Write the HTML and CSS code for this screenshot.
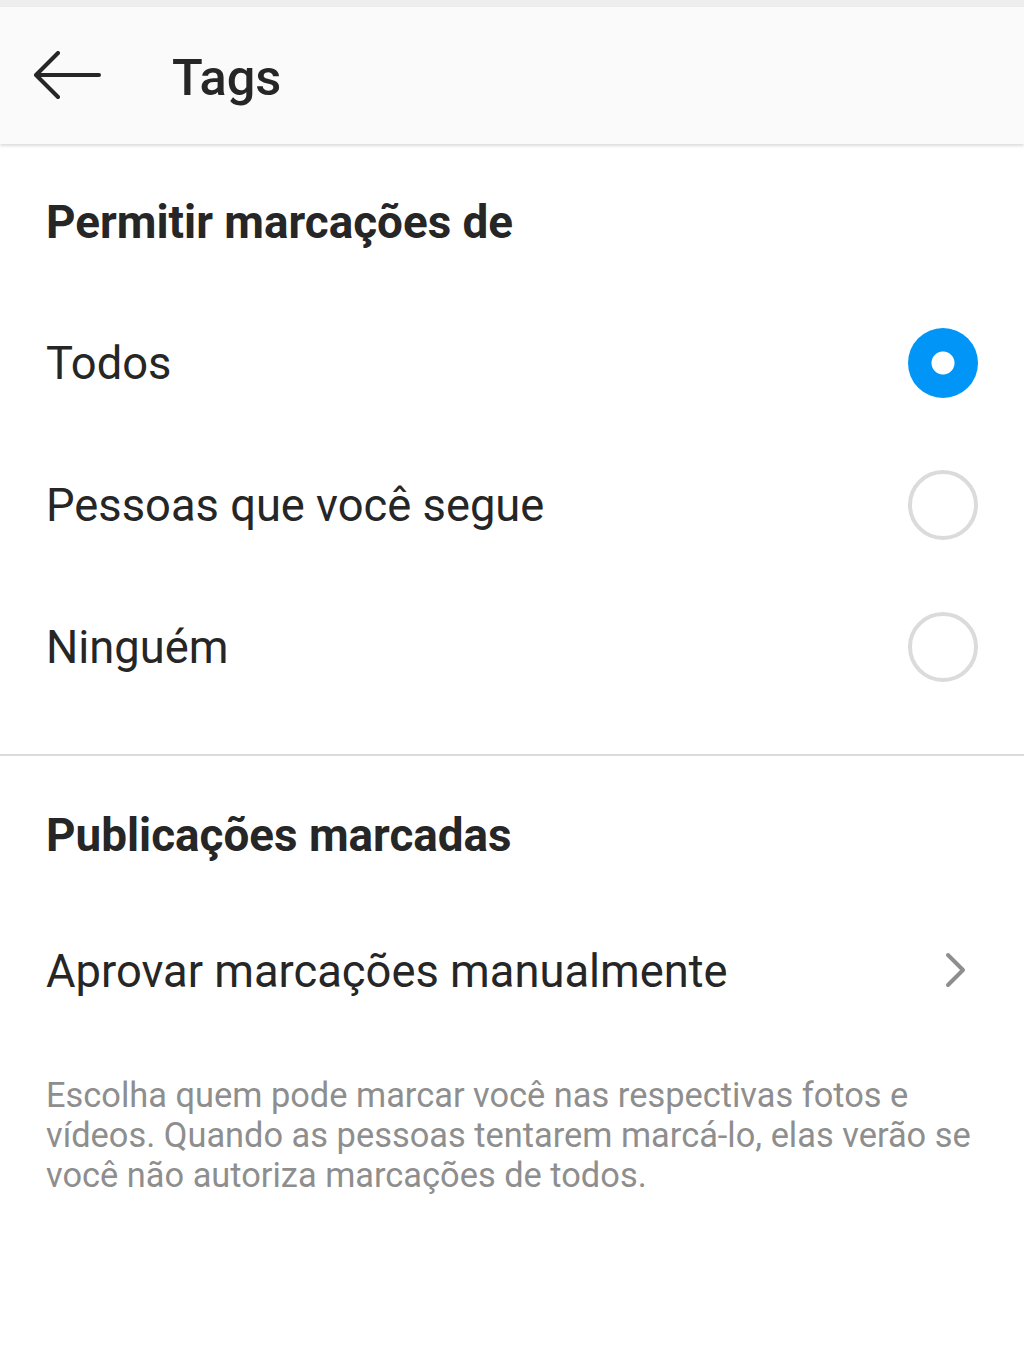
FILE: index.html
```html
<!DOCTYPE html>
<html lang="pt">

<head>
    <meta charset="UTF-8">
    <meta name="viewport" content="width=device-width, initial-scale=1.0">
    <title>Tags</title>
    <link rel="stylesheet" href="styles.css">
</head>

<body>
    <div class="status-strip"></div>
    <header class="top-bar">
        <button class="back-button" aria-label="Voltar">
            <svg width="70" height="52" viewBox="0 0 70 52">
                <path d="M66 24 H4 M25 2 L3 24 L25 46" fill="none" stroke="#262626" stroke-width="4"
                    stroke-linecap="round" stroke-linejoin="round" />
            </svg>
        </button>
        <h1 class="title">Tags</h1>
    </header>

    <section class="group">
        <h2 class="group-title">Permitir marcações de</h2>
        <label class="option">
            <span class="option-label">Todos</span>
            <span class="radio radio-checked"></span>
        </label>
        <label class="option">
            <span class="option-label">Pessoas que você segue</span>
            <span class="radio"></span>
        </label>
        <label class="option">
            <span class="option-label">Ninguém</span>
            <span class="radio"></span>
        </label>
    </section>

    <section class="group group-last">
        <h2 class="group-title">Publicações marcadas</h2>
        <div class="option">
            <span class="option-label">Aprovar marcações manualmente</span>
            <svg class="chevron" width="24" height="40" viewBox="0 0 24 40">
                <path d="M4 4 L19 19 L4 34" fill="none" stroke="#8e8e8e" stroke-width="4"
                    stroke-linecap="round" stroke-linejoin="round" />
            </svg>
        </div>
        <p class="hint">Escolha quem pode marcar você nas respectivas fotos e vídeos. Quando as pessoas tentarem
            marcá-lo, elas verão se você não autoriza marcações de todos.</p>
    </section>
</body>

</html>
```

FILE: styles.css
```css
body {
    margin: 0;
    font-family: Roboto, "Liberation Sans", sans-serif;
    background-color: #ffffff;
    color: #262626;
}

.status-strip {
    height: 7px;
    background-color: #eeeeee;
}

.top-bar {
    height: 137px;
    display: flex;
    align-items: center;
    background-color: #fafafa;
    box-shadow: 0 2px 3px rgba(0, 0, 0, 0.14);
    position: relative;
}

.back-button {
    margin-left: 33px;
    margin-top: 2px;
    padding: 0;
    border: none;
    background: none;
    display: flex;
}

.title {
    margin: 4px 0 0 69px;
    font-size: 50.5px;
    font-weight: 500;
}

.group {
    padding-top: 4px;
    padding-bottom: 36px;
    border-bottom: 2px solid #dbdbdb;
}

.group-last {
    border-bottom: none;
    padding-top: 0;
}

.group-title {
    margin: 0;
    padding: 4px 46px 0;
    height: 140px;
    display: flex;
    align-items: center;
    font-size: 45.8px;
    font-weight: 700;
}

.group-last .group-title {
    padding-top: 14px;
    height: 130px;
}

.option {
    height: 142px;
    display: flex;
    align-items: center;
    justify-content: space-between;
    padding: 0 46px 0 46px;
}

.option-label {
    font-size: 45.3px;
}

.radio {
    width: 62px;
    height: 62px;
    border-radius: 50%;
    border: 4px solid #dbdbdb;
}

.radio-checked {
    width: 70px;
    height: 70px;
    border: none;
    background: radial-gradient(circle, #ffffff 0 11px, #0095f6 12px);
}

.chevron {
    margin-right: 10px;
}

.hint {
    margin: 33px 0 0;
    padding: 0 46px;
    font-size: 34.4px;
    line-height: 40px;
    color: #8e8e8e;
}
```
